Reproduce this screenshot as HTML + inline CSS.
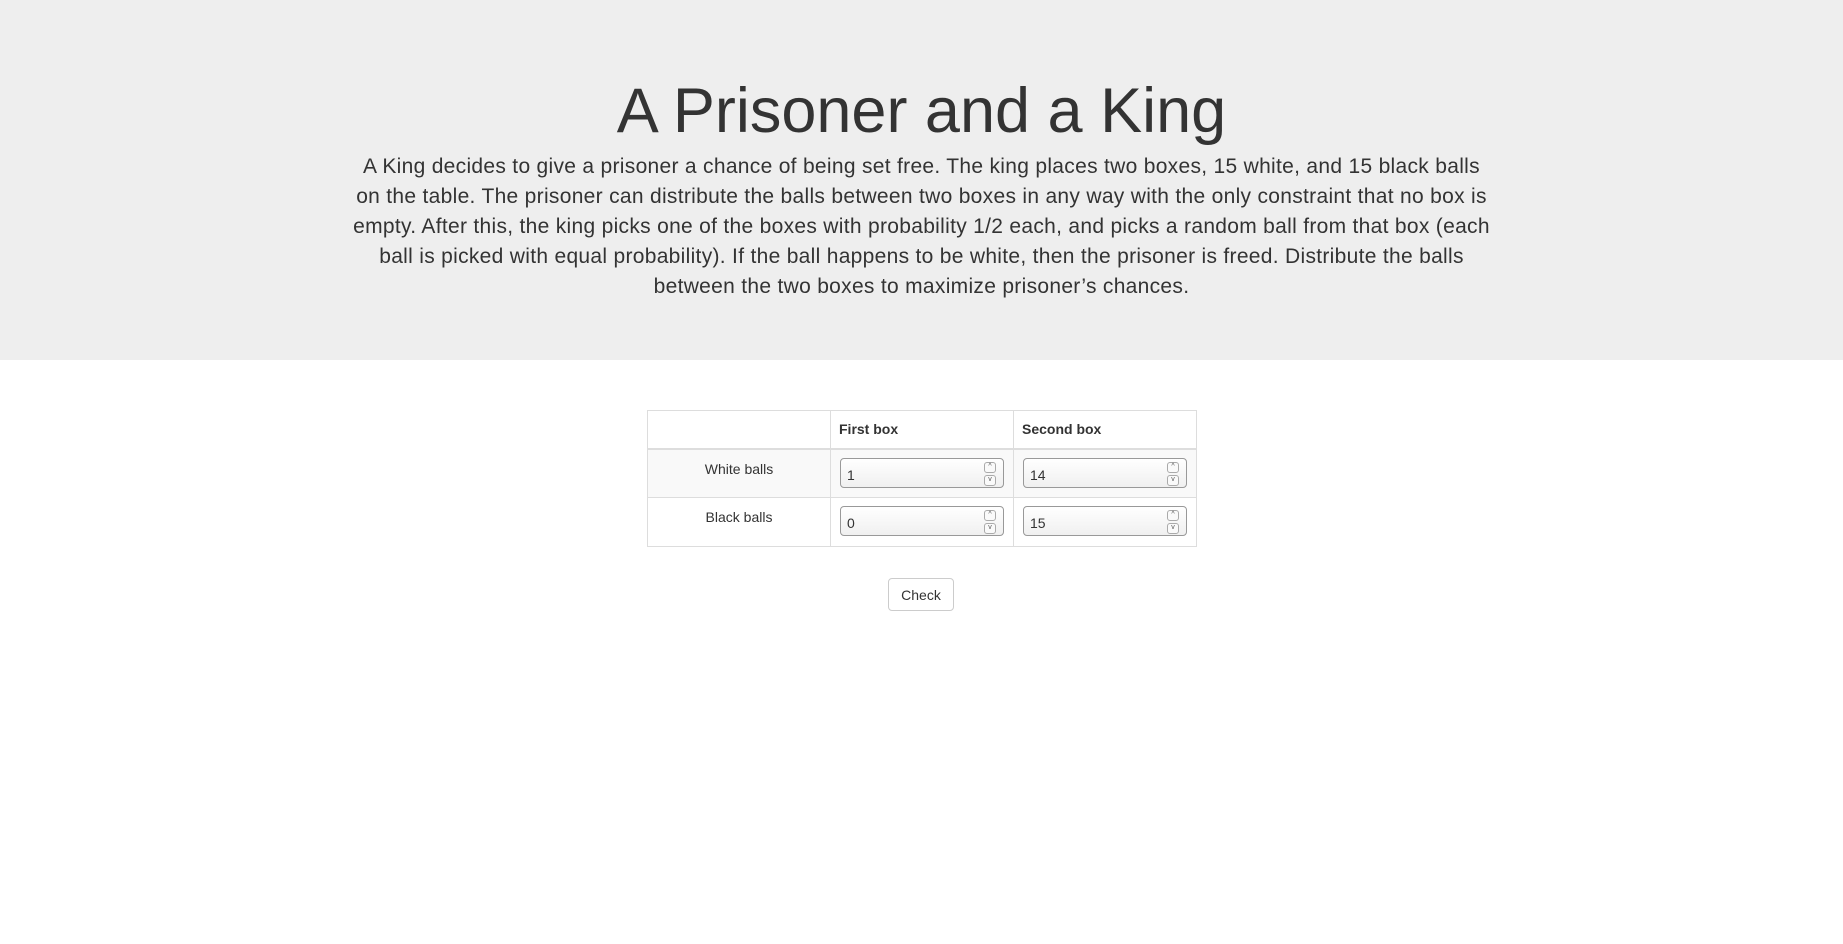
<!DOCTYPE html>
<html><head><style>
body{margin:0;font-family:"Liberation Sans",sans-serif;color:#333;font-size:14px;background:#fff}
.jumbo{background:#eee;height:360px;box-sizing:border-box;padding-top:77px;text-align:center}
h1{margin:0;font-size:63px;font-weight:normal;line-height:69px}
.jumbo p{width:1300px;margin:6px auto 0;font-size:21px;line-height:30px;letter-spacing:0.3px}
.jumbo p span{display:block;white-space:nowrap}
table{position:absolute;left:647px;top:410px;width:550px;border-collapse:collapse}
td,th{border:1px solid #ddd;padding:8px;box-sizing:border-box;width:183px}
th{text-align:left;font-weight:bold;height:38px;border-bottom:2px solid #ddd}
td{height:49px;vertical-align:top}
td.l{text-align:center;padding-top:11px}
tr.s td{background:#f9f9f9}
.in{position:relative;width:164px;height:30px;box-sizing:border-box;border:1px solid #999;border-radius:4px;background:linear-gradient(#fff,#f0f0f0);padding:8px 6px 0;font-size:14px;margin-left:1px}
.sp{position:absolute;right:7px;top:3px;width:12px}
.sp div{height:9px;border:1px solid #aaa;border-radius:3px;margin-bottom:2px;font-size:7px;line-height:8px;text-align:center;color:#555;background:#fafafa}
.btn{position:absolute;left:888px;top:578px;width:66px;height:33px;box-sizing:border-box;border:1px solid #ccc;border-radius:4px;text-align:center;line-height:33px;font-size:14px;background:#fff}
</style></head><body>
<div class="jumbo"><h1>A Prisoner and a King</h1>
<p><span>A King decides to give a prisoner a chance of being set free. The king places two boxes, 15 white, and 15 black balls</span><span>on the table. The prisoner can distribute the balls between two boxes in any way with the only constraint that no box is</span><span>empty. After this, the king picks one of the boxes with probability 1/2 each, and picks a random ball from that box (each</span><span>ball is picked with equal probability). If the ball happens to be white, then the prisoner is freed. Distribute the balls</span><span>between the two boxes to maximize prisoner’s chances.</span></p></div>
<table>
<tr><th></th><th>First box</th><th>Second box</th></tr>
<tr class="s"><td class="l">White balls</td><td><div class="in">1<div class="sp"><div>^</div><div>v</div></div></div></td><td><div class="in">14<div class="sp"><div>^</div><div>v</div></div></div></td></tr>
<tr><td class="l">Black balls</td><td><div class="in">0<div class="sp"><div>^</div><div>v</div></div></div></td><td><div class="in">15<div class="sp"><div>^</div><div>v</div></div></div></td></tr>
</table>
<div class="btn">Check</div>
</body></html>
